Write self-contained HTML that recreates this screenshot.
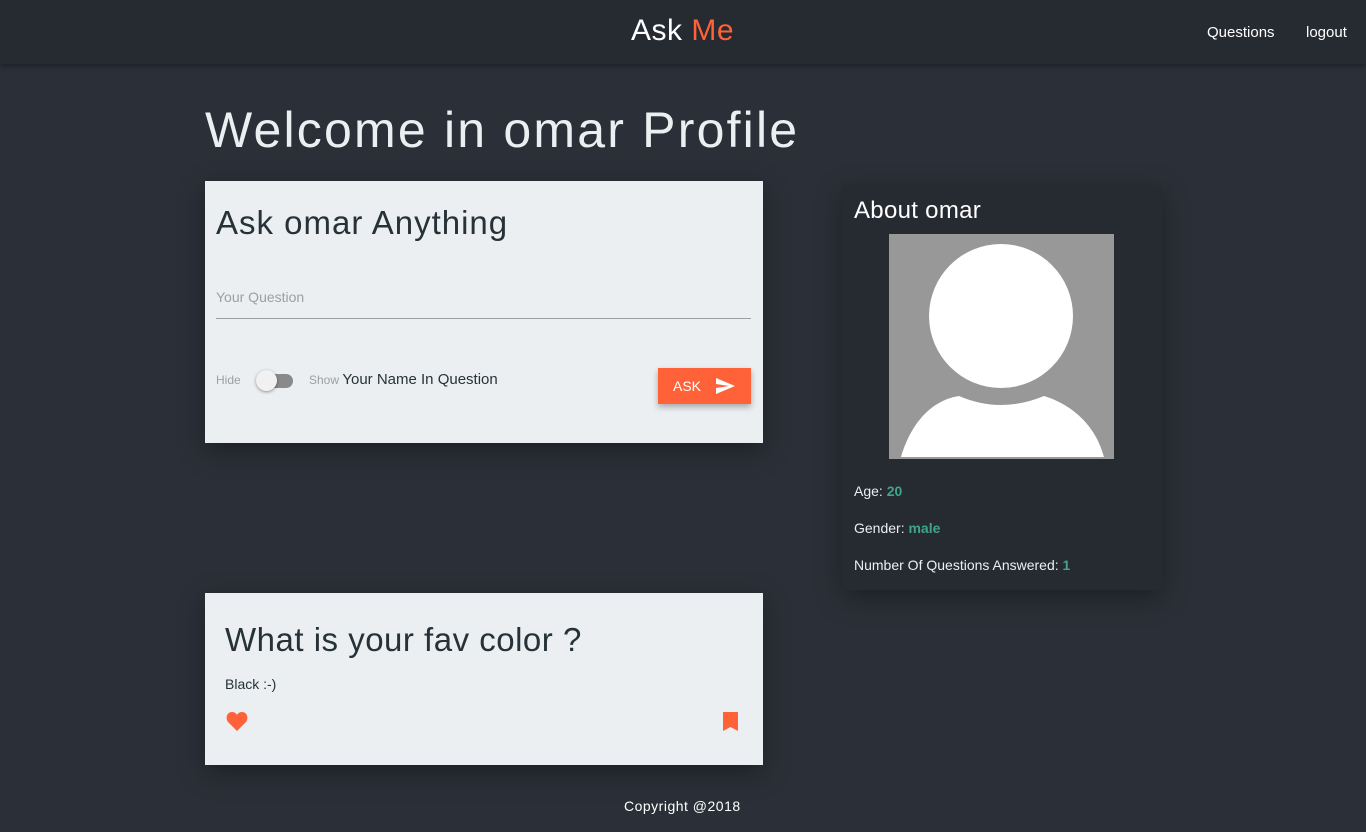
<!DOCTYPE html>
<html><head><meta charset="utf-8"><style>
*{box-sizing:border-box;margin:0;padding:0}
body{width:1366px;height:832px;background:#2b3038;font-family:"Liberation Sans",sans-serif;color:#eceff1;position:relative;overflow:hidden}
.nav{position:absolute;left:0;top:0;width:1366px;height:64px;background:#262a31;box-shadow:0 2px 5px rgba(0,0,0,.35)}
.brand{position:absolute;left:631px;top:14px;font-size:30px;color:#fff;letter-spacing:.5px}
.brand span{color:#ff6138}
.nl{position:absolute;top:24px;font-size:15px;color:#fff}
h1{position:absolute;left:205px;top:101px;font-size:50px;font-weight:400;color:#eceff1;letter-spacing:2.2px}
.card{position:absolute;background:#eceff1;color:#263238;box-shadow:0 8px 25px rgba(0,0,0,.35)}
.dark{position:absolute;background:#262a31;box-shadow:0 8px 25px rgba(0,0,0,.35)}
.t{color:#3fa58e;font-weight:bold}
</style></head><body>
<div class="nav"><div class="brand">Ask <span>Me</span></div>
<div class="nl" style="left:1207px">Questions</div><div class="nl" style="left:1306px">logout</div></div>
<h1>Welcome in omar Profile</h1>
<div class="card" style="left:205px;top:181px;width:558px;height:262px">
<div style="position:absolute;left:11px;top:23px;font-size:33px;letter-spacing:1px">Ask omar Anything</div>
<div style="position:absolute;left:11px;top:108px;font-size:14px;color:#9e9e9e">Your Question</div>
<div style="position:absolute;left:11px;top:137px;width:535px;height:1px;background:#9e9e9e"></div>
<div style="position:absolute;left:11px;top:192px;font-size:12px;color:#9e9e9e">Hide</div>
<div style="position:absolute;left:55px;top:193px;width:33px;height:14px;border-radius:7px;background:#8a8a8a"></div>
<div style="position:absolute;left:51px;top:189px;width:21px;height:21px;border-radius:50%;background:#f1f1f1;box-shadow:0 1px 3px rgba(0,0,0,.4)"></div>
<div style="position:absolute;left:104px;top:190px;font-size:15px"><span style="font-size:12px;color:#9e9e9e">Show </span>Your Name In Question</div>
<div style="position:absolute;left:453px;top:187px;width:93px;height:36px;background:#ff6138;color:#fff;font-size:14px;box-shadow:0 3px 6px rgba(0,0,0,.3)"><span style="position:absolute;left:15px;top:10px">ASK</span>
<svg style="position:absolute;left:58px;top:10px" width="19" height="16" viewBox="0 0 19 16"><path d="M0 0L19 8L0 16L0 10L13 8L0 6Z" fill="#fff"/></svg></div>
</div>
<div class="dark" style="left:842px;top:185px;width:320px;height:405px">
<div style="position:absolute;left:12px;top:12px;font-size:24px;color:#fff;letter-spacing:.3px">About omar</div>
<svg style="position:absolute;left:47px;top:49px" width="225" height="225" viewBox="0 0 225 225"><rect width="225" height="225" fill="#989898"/><circle cx="112" cy="82" r="72" fill="#fff"/><path d="M12 223C25 180 50 165 70 162Q112 180 155 162C175 168 205 185 215 223Z" fill="#fff"/></svg>
<div style="position:absolute;left:12px;top:298px;font-size:14px">Age: <span class="t">20</span></div>
<div style="position:absolute;left:12px;top:335px;font-size:14px">Gender: <span class="t">male</span></div>
<div style="position:absolute;left:12px;top:372px;font-size:14px">Number Of Questions Answered: <span class="t">1</span></div>
</div>
<div class="card" style="left:205px;top:593px;width:558px;height:172px">
<div style="position:absolute;left:20px;top:28px;font-size:33px;letter-spacing:.5px">What is your fav color ?</div>
<div style="position:absolute;left:20px;top:83px;font-size:14px">Black :-)</div>
<svg style="position:absolute;left:21px;top:119px" width="22" height="20" viewBox="0 0 22 20"><path d="M11 19L2 10C-1 6 1 0 6 0C8 0 10 1 11 3C12 1 14 0 16 0C21 0 23 6 20 10Z" fill="#ff6138"/></svg>
<svg style="position:absolute;left:518px;top:119px" width="15" height="19" viewBox="0 0 15 19"><path d="M0 0H15V19L7.5 15L0 19Z" fill="#ff6138"/></svg>
</div>
<div style="position:absolute;left:624px;top:798px;font-size:14px;color:#fff;letter-spacing:.5px">Copyright @2018</div>
</body></html>
